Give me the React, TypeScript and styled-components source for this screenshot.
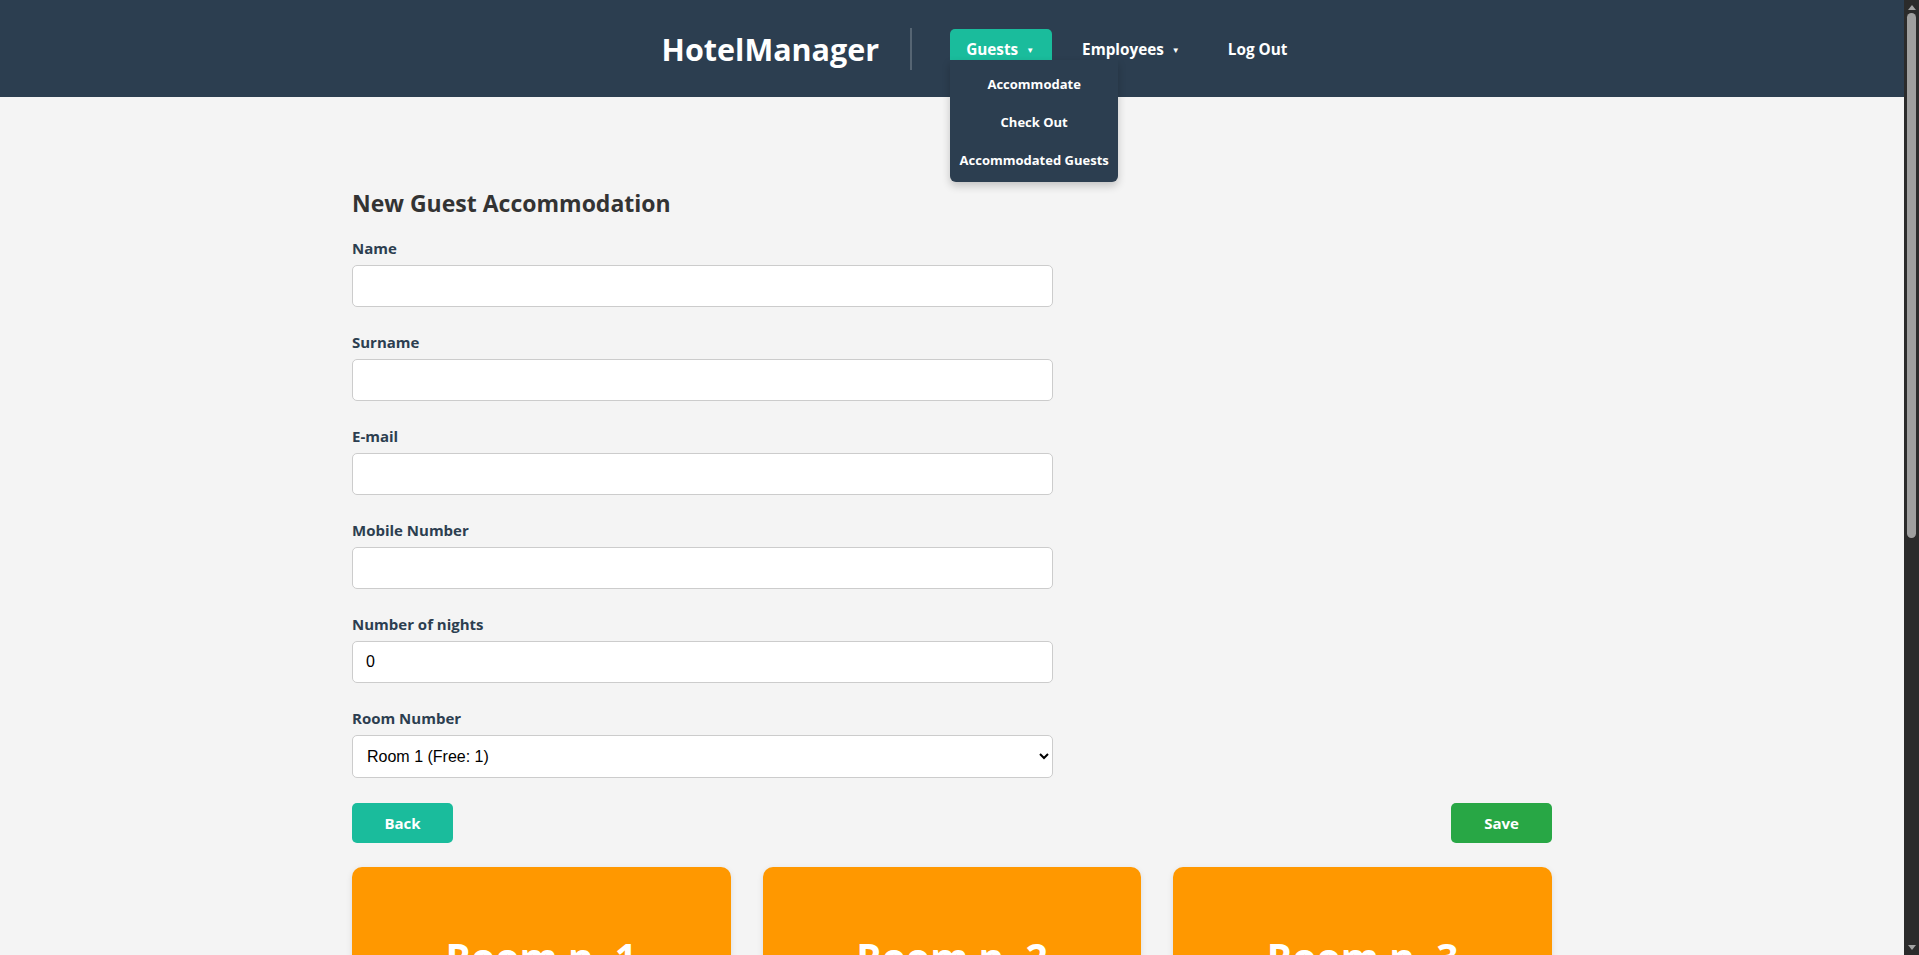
import React, { useState } from 'react';
import styled, { createGlobalStyle } from 'styled-components';

const Colors = {
  navy: '#2c3e50',
  teal: '#1abc9c',
  green: '#28a745',
  orange: '#ff9800',
  page: '#f4f4f4',
  border: '#cccccc',
  text: '#333333',
};

const GlobalStyle = createGlobalStyle`
  html, body {
    margin: 0;
    padding: 0;
    background: ${Colors.page};
    font-family: 'Open Sans', 'Noto Sans', sans-serif;
  }
  * { box-sizing: border-box; }
`;

interface Room {
  id: number;
  free: number;
  beds: number;
}

const rooms: Room[] = [
  { id: 1, free: 1, beds: 2 },
  { id: 2, free: 2, beds: 2 },
  { id: 3, free: 3, beds: 3 },
  { id: 4, free: 2, beds: 2 },
  { id: 5, free: 4, beds: 4 },
  { id: 6, free: 1, beds: 1 },
];

const fields = [
  { id: 'name', label: 'Name', type: 'text', initial: '' },
  { id: 'surname', label: 'Surname', type: 'text', initial: '' },
  { id: 'email', label: 'E-mail', type: 'email', initial: '' },
  { id: 'mobile', label: 'Mobile Number', type: 'text', initial: '' },
  { id: 'nights', label: 'Number of nights', type: 'number', initial: '0' },
];

const App: React.FC = () => {
  const [values, setValues] = useState<Record<string, string>>(
    Object.fromEntries(fields.map((f) => [f.id, f.initial]))
  );
  const [room, setRoom] = useState<string>('1');

  const handleChange = (event: React.ChangeEvent<HTMLInputElement>) => {
    setValues({ ...values, [event.target.name]: event.target.value });
  };

  return (
    <Page>
      <GlobalStyle />
      <Header>
        <Logo>HotelManager</Logo>
        <Divider />
        <Nav>
          <NavItem>
            <NavButton active>
              Guests <Caret>▼</Caret>
            </NavButton>
            <Dropdown>
              <DropdownItem>Accommodate</DropdownItem>
              <DropdownItem>Check Out</DropdownItem>
              <DropdownItem>Accommodated Guests</DropdownItem>
            </Dropdown>
          </NavItem>
          <NavItem>
            <NavButton>
              Employees <Caret>▼</Caret>
            </NavButton>
          </NavItem>
          <NavItem>
            <NavButton>Log Out</NavButton>
          </NavItem>
        </Nav>
      </Header>

      <Container>
        <Title>New Guest Accommodation</Title>
        <Form>
          {fields.map((f) => (
            <Field key={f.id}>
              <Label htmlFor={f.id}>{f.label}</Label>
              <Input
                id={f.id}
                name={f.id}
                type={f.type}
                value={values[f.id]}
                onChange={handleChange}
              />
            </Field>
          ))}
          <Field>
            <Label htmlFor="room">Room Number</Label>
            <Select id="room" value={room} onChange={(e) => setRoom(e.target.value)}>
              {rooms.map((r) => (
                <option key={r.id} value={r.id}>
                  Room {r.id} (Free: {r.free})
                </option>
              ))}
            </Select>
          </Field>
        </Form>

        <ButtonRow>
          <ActionButton color={Colors.teal}>Back</ActionButton>
          <ActionButton color={Colors.green}>Save</ActionButton>
        </ButtonRow>

        <RoomGrid>
          {rooms.map((r) => (
            <RoomCard key={r.id}>
              <RoomTitle>Room n. {r.id}</RoomTitle>
              <RoomInfo>Beds: {r.beds}</RoomInfo>
              <RoomInfo>Free: {r.free}</RoomInfo>
            </RoomCard>
          ))}
        </RoomGrid>
      </Container>

      {/* browser scrollbar, drawn since the headless view hides it */}
      <ScrollTrack>
        <ScrollArrow />
        <ScrollThumb />
        <ScrollArrow down />
      </ScrollTrack>
    </Page>
  );
};

const Page = styled.div`
  margin-right: 15px;
`;

const Header = styled.header`
  height: 97px;
  background: ${Colors.navy};
  display: flex;
  align-items: center;
  justify-content: center;
  padding-left: 63px;
`;

const Logo = styled.div`
  color: #fff;
  font-size: 30.5px;
  font-weight: 700;
  padding-right: 31px;
`;

const Divider = styled.div`
  width: 2px;
  height: 42px;
  background: #566573;
  margin-right: 38px;
`;

const Nav = styled.nav`
  display: flex;
  align-items: center;
  gap: 14px;
`;

const NavItem = styled.div`
  position: relative;
`;

const NavButton = styled.button<{ active?: boolean }>`
  border: none;
  border-radius: 5px;
  background: ${(p) => (p.active ? Colors.teal : 'transparent')};
  color: #fff;
  font-family: inherit;
  font-size: 15.3px;
  font-weight: 700;
  height: 40px;
  padding: 0 18px 0 16px;
  cursor: pointer;
`;

const Caret = styled.span`
  font-size: 8px;
  margin-left: 4px;
  vertical-align: 2px;
`;

const Dropdown = styled.div`
  position: absolute;
  top: 31px;
  left: 0;
  width: 168px;
  background: ${Colors.navy};
  border-radius: 0 0 6px 6px;
  box-shadow: 0 4px 8px rgba(0, 0, 0, 0.2);
  padding: 5px 0 3px;
  z-index: 10;
`;

const DropdownItem = styled.div`
  color: #fff;
  font-size: 13px;
  font-weight: 700;
  line-height: 18px;
  padding: 10px 4px;
  text-align: center;
  white-space: nowrap;
  cursor: pointer;
`;

const Container = styled.main`
  max-width: 1200px;
  margin: 0 auto;
  padding: 92px 0 40px;
`;

const Title = styled.h2`
  margin: 0 0 22px;
  color: ${Colors.text};
  font-size: 23px;
  font-weight: 700;
  line-height: 28px;
`;

const Form = styled.form`
  width: 701px;
  display: flex;
  flex-direction: column;
  gap: 26px;
`;

const Field = styled.div`
  display: flex;
  flex-direction: column;
  gap: 8px;
`;

const Label = styled.label`
  color: ${Colors.navy};
  font-size: 15px;
  font-weight: 700;
  line-height: 18px;
`;

const Input = styled.input`
  height: 42px;
  padding: 0 13px;
  border: 1px solid ${Colors.border};
  border-radius: 5px;
  background: #fff;
  font-family: 'Liberation Sans', Arial, sans-serif;
  font-size: 16px;
  color: #000;
  outline: none;
  &::-webkit-inner-spin-button { display: none; }
`;

const Select = styled.select`
  height: 43px;
  padding: 0 10px;
  border: 1px solid ${Colors.border};
  border-radius: 5px;
  background: #fff;
  font-family: 'Liberation Sans', Arial, sans-serif;
  font-size: 16px;
  color: #000;
`;

const ButtonRow = styled.div`
  display: flex;
  justify-content: space-between;
  margin: 25px 0 24px;
`;

const ActionButton = styled.button<{ color: string }>`
  width: 101px;
  height: 40px;
  border: none;
  border-radius: 5px;
  background: ${(p) => p.color};
  color: #fff;
  font-family: inherit;
  font-size: 15px;
  font-weight: 700;
  cursor: pointer;
`;

const RoomGrid = styled.div`
  display: grid;
  grid-template-columns: repeat(3, 1fr);
  gap: 32px;
`;

const RoomCard = styled.div`
  background: ${Colors.orange};
  border-radius: 10px;
  box-shadow: 0 2px 6px rgba(0, 0, 0, 0.1);
  padding: 62px 20px 60px;
  height: 370px;
  color: #fff;
  text-align: center;
`;

const RoomTitle = styled.h3`
  margin: 0 0 40px;
  font-size: 39px;
  font-weight: 700;
  line-height: 56px;
`;

const RoomInfo = styled.p`
  margin: 0 0 16px;
  font-size: 22px;
  font-weight: 700;
`;

const ScrollTrack = styled.div`
  position: fixed;
  top: 0;
  right: 0;
  width: 15px;
  height: 100vh;
  background: #2b2b2b;
  display: flex;
  flex-direction: column;
  align-items: center;
  padding: 3px 0;
  z-index: 20;
`;

const ScrollArrow = styled.div<{ down?: boolean }>`
  width: 0;
  height: 0;
  border-left: 4px solid transparent;
  border-right: 4px solid transparent;
  ${(p) => (p.down ? 'border-top' : 'border-bottom')}: 5px solid #a3a3a3;
  margin: ${(p) => (p.down ? 'auto 0 2px' : '2px 0 0')};
`;

const ScrollThumb = styled.div`
  width: 9px;
  height: 525px;
  margin-top: 3px;
  background: #9f9f9f;
  border-radius: 5px;
`;

export default App;
